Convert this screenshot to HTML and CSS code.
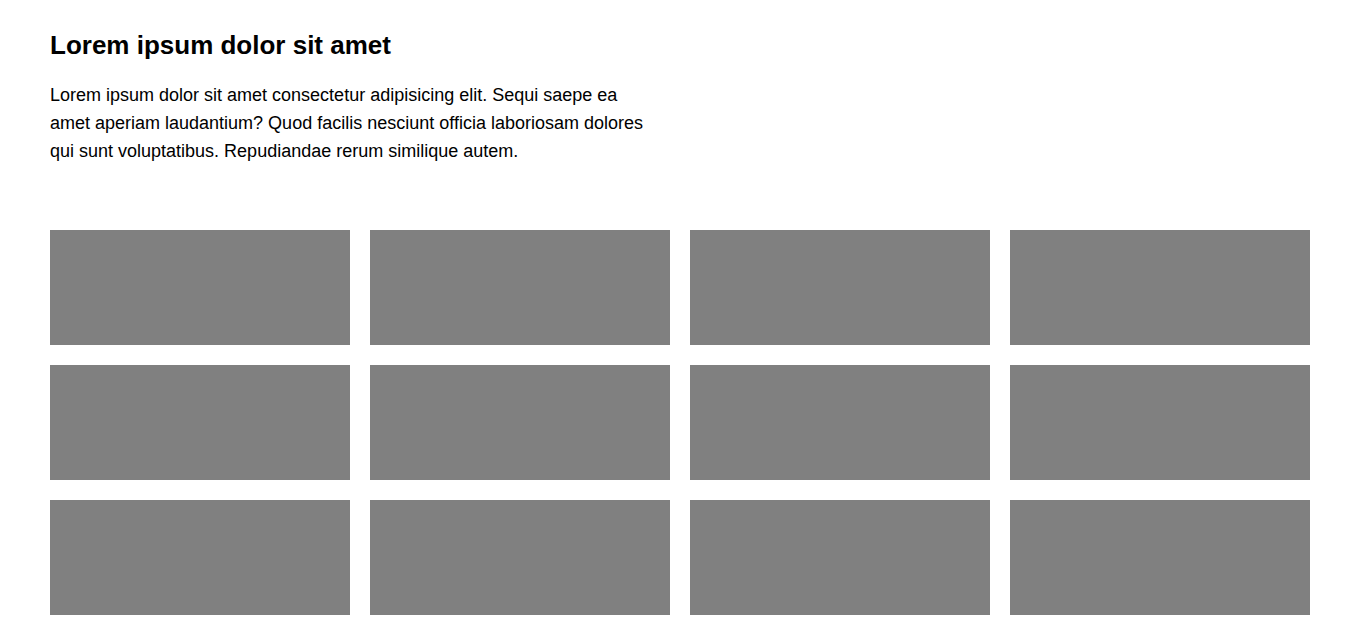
FILE: index.html
```html
<!DOCTYPE html>
<html lang="en">
<head>
<meta charset="utf-8">
<title>Grid</title>
<link rel="stylesheet" href="styles.css">
</head>
<body>
<main class="page">
  <h1 class="title">Lorem ipsum dolor sit amet</h1>
  <p class="intro">Lorem ipsum dolor sit amet consectetur adipisicing elit. Sequi saepe ea amet aperiam laudantium? Quod facilis nesciunt officia laboriosam dolores qui sunt voluptatibus. Repudiandae rerum similique autem.</p>
  <section class="grid">
    <div class="tile"></div>
    <div class="tile"></div>
    <div class="tile"></div>
    <div class="tile"></div>
    <div class="tile"></div>
    <div class="tile"></div>
    <div class="tile"></div>
    <div class="tile"></div>
    <div class="tile"></div>
    <div class="tile"></div>
    <div class="tile"></div>
    <div class="tile"></div>
  </section>
</main>
</body>
</html>
```
FILE: styles.css
```css
html, body {
  margin: 0;
  padding: 0;
  background: #fff;
}
body {
  font-family: "Liberation Sans", Arial, sans-serif;
  color: #000;
}
.page {
  padding: 30px 50px 20px 50px;
}
.title {
  margin: 0;
  font-size: 26px;
  line-height: 30px;
  font-weight: bold;
}
.intro {
  margin: 21px 0 0 0;
  max-width: 600px;
  font-size: 18px;
  line-height: 28px;
}
.grid {
  margin-top: 65px;
  display: grid;
  grid-template-columns: repeat(4, 300px);
  grid-auto-rows: 115px;
  gap: 20px;
}
.tile {
  background: #808080;
}
```
